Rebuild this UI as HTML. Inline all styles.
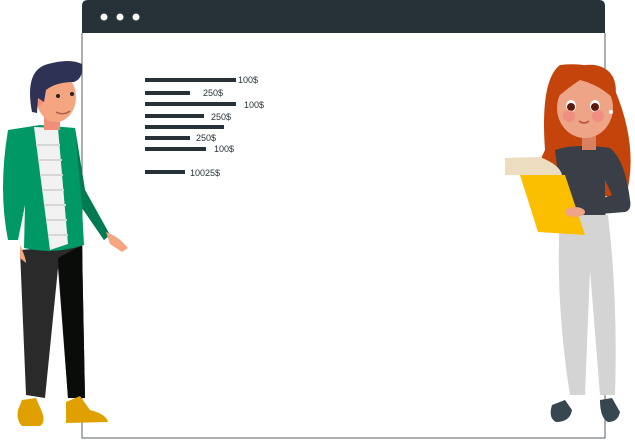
<!DOCTYPE html>
<html><head><meta charset="utf-8"><style>
html,body{margin:0;padding:0;background:#fff;width:635px;height:441px;overflow:hidden}
svg{display:block}
text{font-family:"Liberation Sans",sans-serif;font-size:9px;fill:#263238}
</style></head><body>
<svg width="635" height="441" viewBox="0 0 635 441">
<path d="M82,33 V438 H605 V33" fill="#fff" stroke="#5b6166" stroke-width="1"/>
<path d="M82,33 V6 Q82,0 88,0 H599 Q605,0 605,6 V33 Z" fill="#263238"/>
<circle cx="104" cy="17" r="3.5" fill="#fff"/><circle cx="120" cy="17" r="3.5" fill="#fff"/><circle cx="136" cy="17" r="3.5" fill="#fff"/>
<g fill="#263238">
<rect x="145" y="78" width="91" height="4"/>
<rect x="145" y="91" width="45" height="4"/>
<rect x="145" y="102" width="91" height="4"/>
<rect x="145" y="114" width="59" height="4"/>
<rect x="145" y="125" width="79" height="4"/>
<rect x="145" y="136" width="45" height="4"/>
<rect x="145" y="147" width="61" height="4"/>
<rect x="145" y="170" width="40" height="4"/>
</g>
<text x="238" y="83">100$</text>
<text x="203" y="96">250$</text>
<text x="244" y="108">100$</text>
<text x="211" y="120">250$</text>
<text x="196" y="141">250$</text>
<text x="214" y="152">100$</text>
<text x="190" y="176">10025$</text>

<!-- man -->
<path d="M26,395 L20,250 L82,245 L85,398 L68,398 L58,268 L45,398 Z" fill="#2a2a2a"/>
<path d="M58,258 L82,245 L85,398 L68,398 Z" fill="#0a0c0a"/>
<path d="M22,400 L36,398 L42,412 Q46,422 40,426 L22,426 Q16,420 18,410Z" fill="#e0a000"/>
<path d="M66,402 L80,396 L90,410 Q106,414 108,422 L66,423 Z" fill="#e0a000"/>
<path d="M8,130 L40,125 L75,128 L85,190 L110,235 L104,240 L82,208 L84,245 Q55,255 24,248 L25,205 L18,240 L8,240 Q-2,190 8,130Z" fill="#009966"/>
<path d="M75,128 L85,190 L110,235 L104,240 L82,208Z" fill="#007a52"/>
<path d="M34,127 L58,128 L68,244 L50,250 Z" fill="#f2f2f2"/>
<g stroke="#d6d6d6" stroke-width="2"><line x1="36" y1="145" x2="60" y2="145"/><line x1="38" y1="160" x2="62" y2="160"/><line x1="40" y1="175" x2="63" y2="175"/><line x1="42" y1="190" x2="64" y2="190"/><line x1="44" y1="205" x2="66" y2="205"/><line x1="46" y1="220" x2="67" y2="220"/><line x1="48" y1="235" x2="68" y2="235"/></g>
<path d="M106,232 Q118,236 128,248 L122,252 L110,244 Z" fill="#f5a57f"/>
<path d="M20,245 Q26,258 26,263 L20,258Z" fill="#f5a57f"/>
<rect x="44" y="110" width="16" height="20" fill="#f0907a"/>
<ellipse cx="56" cy="97" rx="20" ry="25" fill="#f5a57f"/>
<ellipse cx="38" cy="98" rx="6" ry="8" fill="#f0907a"/>
<path d="M32,112 Q24,70 48,64 Q70,58 82,64 Q84,78 74,82 Q56,82 46,90 L44,102 L38,98 L37,113Z" fill="#2e3356"/>
<circle cx="58" cy="96" r="2" fill="#222"/><circle cx="72" cy="94" r="2" fill="#222"/>
<path d="M56,112 Q63,116 70,111" stroke="#b0604a" stroke-width="1.5" fill="none"/>

<!-- woman -->
<path d="M560,65 Q540,80 545,150 Q530,180 540,190 L600,195 L625,200 Q640,150 615,90 Q605,60 560,65Z" fill="#c4440c"/>
<path d="M570,395 Q555,300 560,215 L608,215 Q618,300 615,395 L600,395 L590,270 L585,395Z" fill="#d4d4d4"/>
<path d="M552,405 L565,400 L572,410 Q570,422 556,422 Q548,418 552,405Z" fill="#37474f"/>
<path d="M600,400 L612,398 L620,412 Q618,422 608,422 Q600,418 600,400Z" fill="#37474f"/>
<path d="M555,150 Q575,143 610,148 Q625,160 630,200 Q632,210 625,212 L600,214 L598,200 L612,195 L605,180 L605,215 L560,215 L558,175 Z" fill="#3a3f47"/>
<rect x="582" y="135" width="14" height="15" fill="#d98060"/>
<ellipse cx="585" cy="108" rx="28" ry="30" fill="#eea486"/>
<path d="M560,95 Q565,62 595,65 Q620,70 615,100 Q600,85 580,80 Q568,88 560,95Z" fill="#c4440c"/>
<ellipse cx="571" cy="106" rx="5" ry="6" fill="#fff"/><ellipse cx="595" cy="106" rx="5" ry="6" fill="#fff"/>
<circle cx="571" cy="107" r="4" fill="#5a1a10"/><circle cx="595" cy="107" r="4" fill="#5a1a10"/>
<circle cx="569" cy="116" r="6" fill="#f08a80" opacity=".8"/><circle cx="598" cy="116" r="6" fill="#f08a80" opacity=".8"/>
<path d="M579,121 Q584,125 589,121" stroke="#c05040" stroke-width="1.5" fill="none"/>
<circle cx="611" cy="112" r="2" fill="#fff"/>
<path d="M505,158 L540,157 Q560,165 562,175 L505,175 Z" fill="#ecdcc0"/>
<path d="M520,175 L565,175 L585,235 L538,232 Z" fill="#fbbf00"/>
<ellipse cx="575" cy="212" rx="10" ry="5" fill="#eea486"/>
</svg>
</body></html>
